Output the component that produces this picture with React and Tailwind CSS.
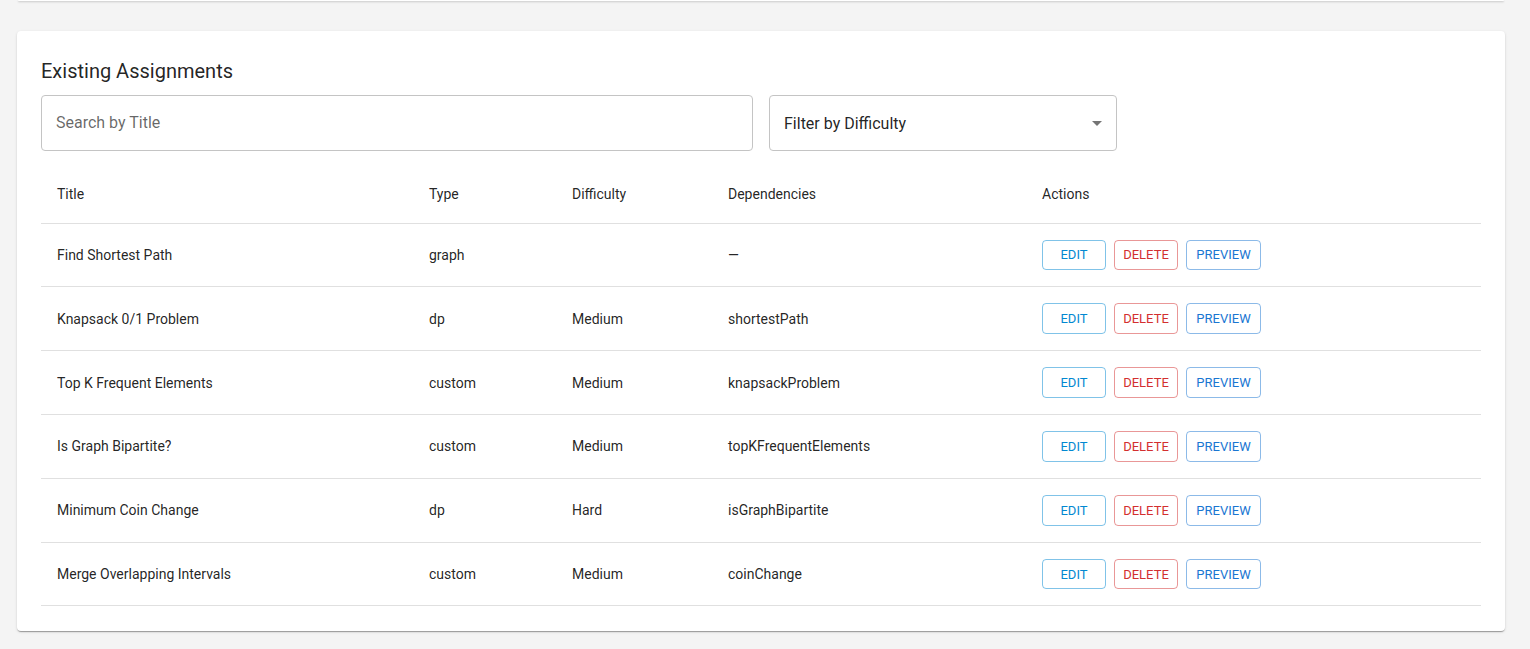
import React from "react";

const rows = [
  ["Find Shortest Path", "graph", "", "—"],
  ["Knapsack 0/1 Problem", "dp", "Medium", "shortestPath"],
  ["Top K Frequent Elements", "custom", "Medium", "knapsackProblem"],
  ["Is Graph Bipartite?", "custom", "Medium", "topKFrequentElements"],
  ["Minimum Coin Change", "dp", "Hard", "isGraphBipartite"],
  ["Merge Overlapping Intervals", "custom", "Medium", "coinChange"],
];

function Btn({ children, cls }) {
  return (
    <button
      className={
        "h-[30.75px] flex items-center justify-center border rounded-[4px] text-[13px] font-normal uppercase tracking-normal leading-none " +
        cls
      }
    >
      {children}
    </button>
  );
}

export default function App() {
  return (
    <div
      className="min-h-screen bg-[#f4f4f4] pl-[17px] pr-[25px]"
      style={{ fontFamily: "Roboto, 'Liberation Sans', sans-serif" }}
    >
      <div className="h-px bg-white rounded-b shadow-[0_1px_2px_rgba(0,0,0,0.25)] mx-[1px]"></div>
      <div className="mt-[30px] bg-white rounded-[4px] shadow-[0_2px_1px_-1px_rgba(0,0,0,0.2),0_1px_1px_0_rgba(0,0,0,0.14),0_1px_3px_0_rgba(0,0,0,0.12)] px-6 pt-6 pb-[25px]">
        <h2 className="text-[20px] leading-8 text-[rgba(0,0,0,0.87)] mb-2">Existing Assignments</h2>
        <div className="flex gap-4">
          <div className="w-[712px] h-14 border border-[#c4c4c4] rounded-[4px] flex items-center px-[14px] text-base text-[rgba(0,0,0,0.6)]">
            Search by Title
          </div>
          <div className="w-[348px] h-14 border border-[#c4c4c4] rounded-[4px] flex items-center justify-between pl-[14px] pr-[7px] text-base text-[rgba(0,0,0,0.87)]">
            <span className="mt-px">Filter by Difficulty</span>
            <svg width="24" height="24" viewBox="0 0 24 24" className="fill-[rgba(0,0,0,0.54)]">
              <path d="M7 10l5 5 5-5z" />
            </svg>
          </div>
        </div>
        <table className="mt-[15px] w-full border-collapse text-sm text-[rgba(0,0,0,0.87)]">
          <thead>
            <tr className="h-[57px] border-b border-[#e0e0e0]">
              <th className="w-[372px] px-4 text-left font-normal">Title</th>
              <th className="w-[143px] px-4 text-left font-normal">Type</th>
              <th className="w-[156px] px-4 text-left font-normal">Difficulty</th>
              <th className="w-[314px] px-4 text-left font-normal">Dependencies</th>
              <th className="px-4 text-left font-normal">Actions</th>
            </tr>
          </thead>
          <tbody>
            {rows.map((r, i) => (
              <tr key={i} className="h-[63.84px] border-b border-[#e0e0e0]">
                <td className="px-4">{r[0]}</td>
                <td className="px-4">{r[1]}</td>
                <td className="px-4">{r[2]}</td>
                <td className="px-4">{r[3]}</td>
                <td className="px-4">
                  <div className="flex gap-2">
                    <Btn cls="w-[64px] text-[#0288d1] border-[rgba(2,136,209,0.5)]">Edit</Btn>
                    <Btn cls="w-[64px] text-[#d32f2f] border-[rgba(211,47,47,0.5)]">Delete</Btn>
                    <Btn cls="w-[75px] text-[#1976d2] border-[rgba(25,118,210,0.5)]">Preview</Btn>
                  </div>
                </td>
              </tr>
            ))}
          </tbody>
        </table>
      </div>
    </div>
  );
}
